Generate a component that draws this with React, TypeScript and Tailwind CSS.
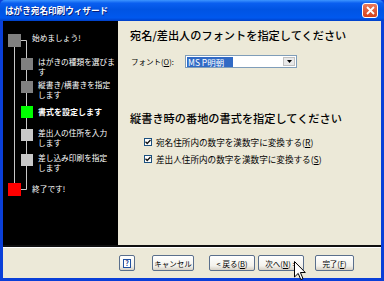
import React from "react";

const F = { fontFamily: '"Noto Sans CJK JP", "Noto Sans", sans-serif' };

function Sq({ color, big }: { color: string; big?: boolean }) {
  return <div className={`${big ? "w-[13px] h-[13px]" : "w-[12px] h-[12px]"} shrink-0 ${color}`} />;
}

function LeftPanel() {
  const sub = (color: string, lines: string[], bold?: boolean) => (
    <div className="flex items-start pl-[18px]">
      <Sq color={color} />
      <div className={`ml-[5px] -mt-[1px] text-white text-[7.7px] leading-[9.5px] whitespace-nowrap ${bold ? "font-bold text-[8px] mt-[1px]" : ""}`}>
        {lines.map((l, i) => (
          <div key={i}>{l}</div>
        ))}
      </div>
    </div>
  );
  return (
    <div className="relative w-[115px] bg-black pt-[13px]">
      <svg className="absolute left-0 top-0" width="115" height="224">
        <g stroke="#c8c8c8" strokeWidth="1" fill="none">
          <line x1="11.5" y1="25" x2="11.5" y2="162" />
          <line x1="18" y1="19.5" x2="23.5" y2="19.5" />
          <line x1="23.5" y1="19.5" x2="23.5" y2="168.5" />
          <line x1="18" y1="168.5" x2="23.5" y2="168.5" />
        </g>
      </svg>
      <div className="relative flex flex-col">
        <div className="h-[24px] flex items-start pl-[5px]">
          <Sq color="bg-[#808080]" big />
          <div className="ml-[11px] -mt-[1px] text-white text-[7.7px] leading-[9.5px] whitespace-nowrap">始めましょう!</div>
        </div>
        <div className="h-[23px]">{sub("bg-[#808080]", ["はがきの種類を選びま", "す"])}</div>
        <div className="h-[25px]">{sub("bg-[#808080]", ["縦書き/横書きを指定", "します"])}</div>
        <div className="h-[23px]">{sub("bg-[#00ff00]", ["書式を設定します"], true)}</div>
        <div className="h-[25px]">{sub("bg-[#c8c8c8]", ["差出人の住所を入力", "します"])}</div>
        <div className="h-[29px]">{sub("bg-[#c8c8c8]", ["差し込み印刷を指定", "します"])}</div>
        <div className="flex items-start pl-[5px]">
          <Sq color="bg-[#ff0000]" big />
          <div className="ml-[11px] mt-[1px] text-white text-[7.7px] leading-[9.5px] whitespace-nowrap">終了です!</div>
        </div>
      </div>
    </div>
  );
}

function Check({ label, k }: { label: string; k: string }) {
  return (
    <div className="flex items-center h-[10px] ml-[14px]">
      <div className="w-[8px] h-[8px] bg-white border border-[#1c5180] flex items-center justify-center">
        <svg width="6" height="6" viewBox="0 0 6 6">
          <path d="M0.5 2.8 L2.2 4.5 L5.5 1" stroke="#111" strokeWidth="1.3" fill="none" />
        </svg>
      </div>
      <div className="ml-[4px] text-[8.6px] leading-[10px] text-black whitespace-nowrap">
        {label}(<span className="underline">{k}</span>)
      </div>
    </div>
  );
}

function RightPanel() {
  return (
    <div className="flex-1 bg-[#ECE9D8] pl-[12px] pt-[7px] flex flex-col">
      <div className="text-[11.2px] leading-[14px] font-medium text-black whitespace-nowrap">宛名/差出人のフォントを指定してください</div>
      <div className="flex items-center h-[13px] mt-[13px] ml-[1px]">
        <div className="w-[54px] text-[7.5px] leading-[10px] text-black whitespace-nowrap">
          フォント(<span className="underline">O</span>):
        </div>
        <div className="w-[112px] h-[13px] bg-white border border-[#7f9db9] flex items-center pl-[1px] pr-[1px]">
          <div className="bg-[#316ac5] text-white text-[8.5px] leading-[10px] pl-[1px] pr-[3px] min-w-[46px] whitespace-nowrap">MS P明朝</div>
          <div className="flex-1" />
          <div className="w-[12px] h-[9px] bg-[#e8e8e8] border border-[#c0c0c0] flex items-center justify-center">
            <svg width="5" height="3" viewBox="0 0 5 3"><path d="M0 0 H5 L2.5 3 Z" fill="#000" /></svg>
          </div>
        </div>
      </div>
      <div className="text-[11.2px] leading-[14px] font-medium text-black whitespace-nowrap mt-[43px]">縦書き時の番地の書式を指定してください</div>
      <div className="mt-[12px]">
        <Check label="宛名住所内の数字を漢数字に変換する" k="R" />
      </div>
      <div className="mt-[7px]">
        <Check label="差出人住所内の数字を漢数字に変換する" k="S" />
      </div>
    </div>
  );
}

function Btn({ w, children, ml }: { w: string; children: React.ReactNode; ml: string }) {
  return (
    <div className={`${w} ${ml} h-[16px] rounded-[2px] border border-[#5a6f8c] bg-[linear-gradient(to_bottom,#ffffff,#f3f2ec_70%,#d6d0c5)] flex items-center justify-center text-[7.5px] leading-[9px] text-black whitespace-nowrap`}>
      {children}
    </div>
  );
}

export default function App() {
  return (
    <div className="relative w-[384px] h-[281px] bg-[#0a3fd8] flex flex-col overflow-hidden" style={F}>
      <div className="h-[21px] rounded-t-[5px] bg-[linear-gradient(to_bottom,#3d95ff,#0a5ff0_15%,#0054e3_45%,#0058ee_85%,#0040c8)] flex items-center justify-between pl-[5px] pr-[6px]">
        <div className="text-white text-[8.6px] font-bold leading-[11px] whitespace-nowrap [text-shadow:1px_1px_0_#0a1e7a]">はがき宛名印刷ウィザード</div>
        <div className="w-[16px] h-[15px] rounded-[3px] border border-white bg-[linear-gradient(to_bottom,#e97b5c,#d6401a)] flex items-center justify-center">
          <svg width="9" height="9" viewBox="0 0 9 9"><path d="M1 1 L8 8 M8 1 L1 8" stroke="#fff" strokeWidth="1.8" /></svg>
        </div>
      </div>
      <div className="flex-1 mx-[3px] mb-[3px] bg-[#ECE9D8] flex flex-col">
        <div className="h-[224px] flex">
          <LeftPanel />
          <RightPanel />
        </div>
        <div className="h-[2px] bg-[#101010]" />
        <div className="h-[1px] bg-white" />
        <div className="flex-1 flex items-start pt-[7px]">
          <div className="ml-[116px] w-[16px] h-[16px] rounded-[2px] border border-[#5a6f8c] bg-[linear-gradient(to_bottom,#ffffff,#f3f2ec_70%,#d6d0c5)] flex items-center justify-center">
            <div className="w-[8px] h-[9px] bg-white border border-[#2050a0] flex items-center justify-center text-[7px] leading-[7px] font-bold text-[#10308a]">?</div>
          </div>
          <Btn w="w-[42px]" ml="ml-[17px]">キャンセル</Btn>
          <Btn w="w-[46px]" ml="ml-[15px]">&lt; 戻る(<span className="underline">B</span>)</Btn>
          <Btn w="w-[46px]" ml="ml-[3px]">次へ(<span className="underline">N</span>) &gt;</Btn>
          <Btn w="w-[39px]" ml="ml-[11px]">完了(<span className="underline">F</span>)</Btn>
        </div>
      </div>
      <svg className="absolute left-[294px] top-[261px]" width="12" height="20" viewBox="0 0 12 20">
        <path d="M0.5 0.5 L0.5 16 L4.2 12.4 L6.8 18.6 L9 17.6 L6.4 11.5 L11.3 11.5 Z" fill="#fff" stroke="#000" strokeWidth="1" />
      </svg>
    </div>
  );
}
